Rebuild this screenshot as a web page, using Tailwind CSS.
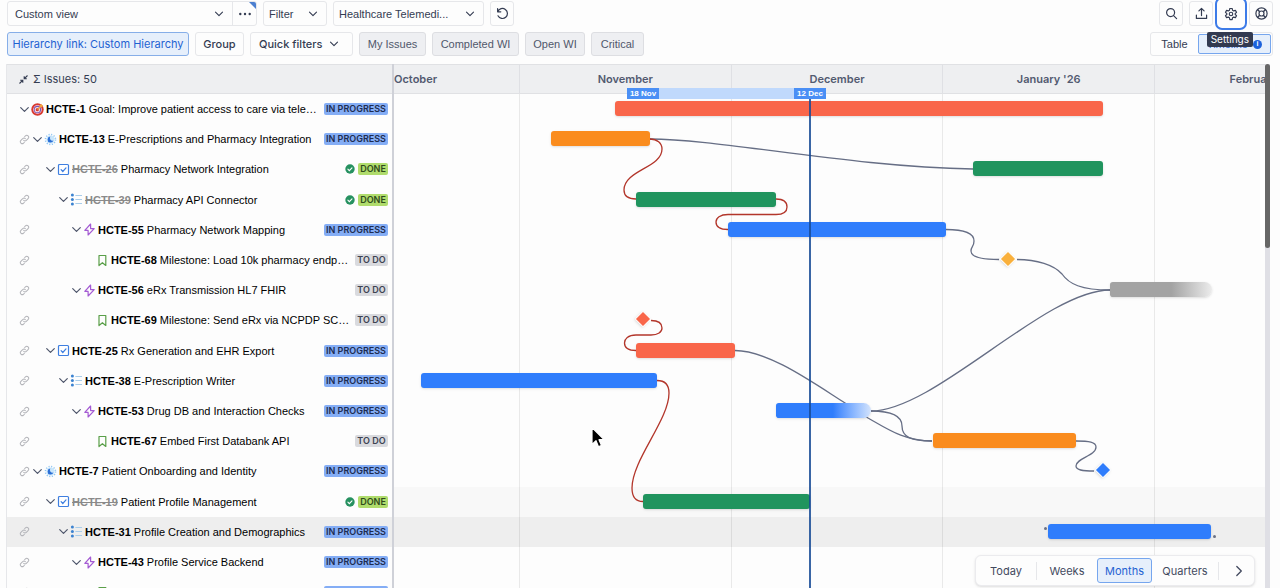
<!DOCTYPE html>
<html lang="en">
<head>
<meta charset="utf-8">
<title>Timeline</title>
<script src="https://cdn.jsdelivr.net/npm/@tailwindcss/browser@4"></script>
</head>
<body class="h-screen overflow-hidden bg-[#fdfdfd] font-['Liberation_Sans',sans-serif] text-[11px] leading-4 text-[#343c52]">
<svg class="hidden" aria-hidden="true">
  <symbol id="chev" viewBox="0 0 12 12"><path d="M2.5 4.2 6 7.7 9.5 4.2" fill="none" stroke="currentColor" stroke-width="1.1" stroke-linecap="round" stroke-linejoin="round"/></symbol>
  <symbol id="link" viewBox="0 0 12 12"><g fill="none" stroke="#b4b5ba" stroke-width="1.1" stroke-linecap="round"><path d="M5.1 6.9a2 2 0 0 0 2.9 0l1.9-1.9a2 2 0 0 0-2.9-2.9l-.9.9"/><path d="M6.9 5.1a2 2 0 0 0-2.9 0L2.1 7a2 2 0 0 0 2.9 2.9l.9-.9"/></g></symbol>
  <symbol id="goal" viewBox="0 0 13 13"><circle cx="6.5" cy="6.5" r="6.2" fill="#d8392f"/><circle cx="6.5" cy="6.5" r="4.4" fill="#f3c3cf"/><circle cx="6.5" cy="6.5" r="3.7" fill="#7d55b4"/><circle cx="6.3" cy="6.7" r="2.6" fill="#f6dfe6"/><circle cx="6.3" cy="6.7" r="1.6" fill="#d8392f"/><path d="M6.5 6.5 10 3" stroke="#f2a33a" stroke-width="1.2"/><path d="M8.8 2.4 10.4.8l.5 1.3 1.4.5-1.6 1.6-1.6.1z" fill="#f4a63c"/></symbol>
  <symbol id="sun" viewBox="0 0 13 13"><circle cx="6.5" cy="6.5" r="5" fill="none" stroke="#8fc6f3" stroke-width="1.6" stroke-dasharray="1.1 1.52"/><circle cx="6.5" cy="6.5" r="3.9" fill="#c9e6fb"/><path d="M6.3 3.6a3 3 0 1 0 3.1 4A2.700 2.700 0 0 1 6.300 3.600z" fill="#2b6fd6"/></symbol>
  <symbol id="task" viewBox="0 0 13 13"><rect x="1.5" y="1.5" width="10" height="10" rx="1" fill="#fff" stroke="#3f7fe0" stroke-width="1.2"/><path d="m4.1 6.7 1.7 1.8L9 4.9" fill="none" stroke="#3f7fe0" stroke-width="1.2" stroke-linecap="round"/></symbol>
  <symbol id="list" viewBox="0 0 13 13"><g fill="#3b82d0"><circle cx="2.4" cy="2" r="1.5"/><circle cx="2.4" cy="6.5" r="1.5"/><circle cx="2.4" cy="11" r="1.5"/></g><path d="M5.4 2.5H12M5.4 6.500H12M5.400 10.500H12" stroke="#a9cdea" stroke-width="1"/></symbol>
  <symbol id="bolt" viewBox="0 0 13 13"><path d="M7.600 1 1.800 7.400h3.300v4.600L11.200 5.600H7.600z" fill="none" stroke="#a45bd3" stroke-width="1.200" stroke-linejoin="round"/></symbol>
  <symbol id="mark" viewBox="0 0 13 13"><path d="M3 1.500h6.800v10L6.400 8.700 3 11.500z" fill="none" stroke="#5a9f49" stroke-width="1.200" stroke-linejoin="round"/></symbol>
  <symbol id="done" viewBox="0 0 10 10"><circle cx="5" cy="5" r="4.700" fill="#269160"/><path d="m2.900 5.200 1.400 1.400L7 3.800" fill="none" stroke="#fff" stroke-width="1.100" stroke-linecap="round"/></symbol>
</svg>

<div class="flex h-full flex-col">
  <header class="flex flex-col gap-[6px] px-[7px] pt-[1px] pb-2">
    <div class="flex items-center gap-[6px]">
      <div class="relative flex h-[25px] w-[250px] rounded-[3px] border border-[#e6e7ea]">
        <label class="relative flex flex-1 items-center">
          <select aria-label="View" class="h-full w-full appearance-none bg-transparent pl-[7px] outline-none"><option>Custom view</option></select>
          <svg class="pointer-events-none absolute right-[7px] size-3"><use href="#chev"/></svg>
        </label>
        <button aria-label="More view actions" class="relative flex w-6 items-center justify-center border-l border-[#e6e7ea]">
          <svg class="h-1 w-3" viewBox="0 0 12 4" fill="#343c52"><circle cx="1.300" cy="2" r="1.200"/><circle cx="6" cy="2" r="1.200"/><circle cx="10.700" cy="2" r="1.200"/></svg>
          <svg class="absolute top-0 right-0 size-[7px]" viewBox="0 0 7 7"><path d="M0 0h5a2 2 0 0 1 2 2v5z" fill="#4c7fd0"/></svg>
        </button>
      </div>
      <button aria-haspopup="true" class="flex h-[25px] w-[64px] items-center justify-between rounded-[3px] border border-[#e6e7ea] pr-[7px] pl-[5px]">Filter<svg class="size-3"><use href="#chev"/></svg></button>
      <label class="relative flex h-[25px] w-[151px] items-center rounded-[3px] border border-[#e6e7ea]">
        <select aria-label="Project" class="h-full w-full appearance-none bg-transparent pl-[5px] outline-none"><option>Healthcare Telemedi...</option></select>
        <svg class="pointer-events-none absolute right-[7px] size-3"><use href="#chev"/></svg>
      </label>
      <button aria-label="Reload" class="flex h-[25px] w-6 items-center justify-center rounded-[3px] border border-[#e6e7ea]">
        <svg class="size-[13px]" viewBox="0 0 13 13" fill="none" stroke="currentColor" stroke-width="1.200" stroke-linecap="round" stroke-linejoin="round"><path d="M1.600 1.600v3.200h3.200M1.800 4.600A5 5 0 1 1 2 8.800"/></svg>
      </button>
      <div class="ml-auto flex gap-[6px]">
        <button aria-label="Search" class="flex h-[25px] w-6 items-center justify-center rounded-[3px] border border-[#e6e7ea]"><svg class="size-[13px]" viewBox="0 0 13 13" fill="none" stroke="currentColor" stroke-width="1.200" stroke-linecap="round"><circle cx="5.600" cy="5.600" r="4"/><path d="m8.600 8.600 3 3"/></svg></button>
        <button aria-label="Export" class="flex h-[25px] w-6 items-center justify-center rounded-[3px] border border-[#e6e7ea]"><svg class="size-[13px]" viewBox="0 0 13 13" fill="none" stroke="currentColor" stroke-width="1.200" stroke-linecap="round" stroke-linejoin="round"><path d="M1.400 8v3.400h10.200V8M6.500 8.600V1.400M3.900 3.900l2.600-2.500 2.600 2.500"/></svg></button>
        <button aria-label="Settings" class="flex h-[25px] w-6 items-center justify-center rounded-[3px] outline-2 outline-offset-2 outline-[#3d7be8]"><svg class="size-[14px]" viewBox="0 0 24 24" fill="none" stroke="currentColor" stroke-width="2" stroke-linejoin="round"><circle cx="12" cy="12" r="3"/><path d="M10 2.500h4l.6 3 2 1.200 2.900-1 2 3.500-2.300 2v1.600l2.300 2-2 3.500-2.900-1-2 1.200-.6 3h-4l-.6-3-2-1.200-2.900 1-2-3.500 2.300-2v-1.600l-2.300-2 2-3.500 2.900 1 2-1.200z"/></svg></button>
        <button aria-label="Help" class="flex h-[25px] w-6 items-center justify-center rounded-[3px] border border-[#e6e7ea]"><svg class="size-[13px]" viewBox="0 0 13 13" fill="none" stroke="currentColor" stroke-width="1.200"><circle cx="6.500" cy="6.500" r="5.600"/><circle cx="6.500" cy="6.500" r="2.500"/><path d="m2.500 2.500 2.200 2.200M10.500 2.500 8.300 4.700M2.500 10.500l2.200-2.200M10.500 10.500 8.300 8.300" stroke-width="1.500"/></svg></button>
      </div>
    </div>
    <div class="flex items-center gap-[6px]">
      <button class="h-[24px] w-[182px] rounded-[3px] border border-[#86aee8] bg-[#e6effb] font-['Inter',sans-serif] text-[#1f62d2]">Hierarchy link: Custom Hierarchy</button>
      <button class="h-[24px] w-[49px] rounded-[3px] border border-[#e6e7ea] font-['Inter',sans-serif] font-medium">Group</button>
      <button aria-haspopup="true" class="flex h-[24px] w-[103px] items-center justify-between rounded-[3px] border border-[#e6e7ea] pr-3 pl-2 font-['Inter',sans-serif] font-medium">Quick filters<svg class="size-3"><use href="#chev"/></svg></button>
      <button class="h-[24px] w-[67px] rounded-[3px] border border-[#dddee2] bg-[#eeeff2] text-[#50576b]">My Issues</button>
      <button class="h-[24px] w-[87px] rounded-[3px] border border-[#dddee2] bg-[#eeeff2] text-[#50576b]">Completed WI</button>
      <button class="h-[24px] w-[60px] rounded-[3px] border border-[#dddee2] bg-[#eeeff2] text-[#50576b]">Open WI</button>
      <button class="h-[24px] w-[53px] rounded-[3px] border border-[#dddee2] bg-[#eeeff2] text-[#50576b]">Critical</button>
      <div class="relative ml-auto flex h-[24px] w-[123px] items-center rounded-[3px] border border-[#e6e7ea] pr-[1px]">
        <button class="flex-1">Table</button>
        <button class="flex h-5 w-[73px] items-center justify-end gap-[5px] rounded-[2px] border border-[#76a6ee] bg-[#e6effb] pr-2 text-[#1f62d2]">Timeline<span class="flex size-[9px] items-center justify-center rounded-full bg-[#1d62dc] text-[7px] font-bold text-white">i</span></button>
        <div role="tooltip" class="absolute -top-[1px] right-[19px] rounded-[2px] bg-[#323a50] px-1 font-['Inter',sans-serif] text-[10px] leading-[15px] text-white">Settings</div>
      </div>
    </div>
  </header>

  <main class="relative mr-[10px] ml-[6px] flex min-h-0 flex-1 overflow-hidden border-l border-[#e6e7ea]">
    <section aria-label="Issues" class="flex w-[387px] shrink-0 flex-col border-r-2 border-[#cfd1d8]">
      <div class="flex h-[30px] shrink-0 items-center gap-[5px] border-y border-[#e0e1e4] bg-[#eeeff1] pl-3">
        <svg class="size-[9px]" viewBox="0 0 9 9" fill="none" stroke="currentColor" stroke-width="1.100"><path d="M8.500.500 5.400 3.600M5.200 1.200v2.600h2.600M.500 8.500l3.100-3.100M1.200 5.200h2.600v2.600"/></svg>
        <span class="font-['Inter',sans-serif]">Σ Issues: 50</span>
      </div>
      <ul id="issues" class="grid h-[604px] shrink-0 grid-rows-20 text-black"></ul>
    </section>

    <section aria-label="Timeline" class="relative flex min-w-0 flex-1 flex-col overflow-hidden">
      <div class="flex h-[30px] w-[958px] shrink-0 border-y border-[#e0e1e4] bg-[#eeeff1] text-center font-['Inter',sans-serif] leading-7 font-semibold text-[#525a70]">
        <div class="w-[126px] border-r border-[#dfe0e4] text-left">October</div>
        <div class="flex-1 border-r border-[#dfe0e4]">November</div>
        <div class="flex-1 border-r border-[#dfe0e4]">December</div>
        <div class="flex-1 border-r border-[#dfe0e4]">January '26</div>
        <div class="w-[197px]">February</div>
      </div>
      <div class="relative">
        <ul id="bands" class="grid h-[604px] grid-rows-20"></ul>
        <div class="pointer-events-none absolute inset-y-0 left-0 flex w-[958px]">
          <div class="w-[126px] border-r border-black/8"></div>
          <div class="flex-1 border-r border-black/8"></div>
          <div class="flex-1 border-r border-black/8"></div>
          <div class="flex-1 border-r border-black/8"></div>
          <div class="w-[197px]"></div>
        </div>
        <svg class="pointer-events-none absolute top-0 left-0 h-[604px] w-[972px]" viewBox="394 94 972 604" fill="none" stroke-width="1.300" aria-label="Dependencies">
          <g stroke="#666e85">
            <path d="M650 139C720 139 850 167 973 169"/>
            <path d="M946 229.500C963 229.500 974 233 974 241 974 247 971 246 971 251 971 257 983 259.500 999 259.500"/>
            <path d="M1017 259.500C1037 259.500 1054 265 1062 274 1069 284 1081 290 1110 290"/>
            <path d="M871 411C935 411 1045 290 1110 290"/>
            <path d="M735 350.500C768 350.500 812 382 845 403L868 418C889 430 905 441 932 441"/>
            <path d="M871 411C888 411 902 415 902 426 902 437 911 441 932 441"/>
            <path d="M1076 441C1089 441 1096 442 1096 447 1096 456 1076 458 1076 466 1076 470 1082 471 1094 471"/>
          </g>
          <g stroke="#b3362b">
            <path d="M650 139C657 139 662 143 662 149 662 168 624 170 624 190 624 196 628 199 636 199"/>
            <path d="M776 199C783 199 787 202 787 207 787 212 783 214.500 776 214.500H728C720 214.500 716 218 716 222 716 227 720 229.500 728 229.500"/>
            <path d="M651 320.500C658 320.500 662 323 662 328 662 332 658 335 651 335H636C628 335 624.500 339 624.500 343 624.500 348 628 350.500 636 350.500"/>
            <path d="M657 380.500C665 380.500 669 385 669 393 669 420 632 460 632 488 632 497 635 501.500 643 501.500"/>
          </g>
        </svg>
        <ul id="bars" class="absolute inset-x-0 top-0 grid h-[604px] grid-rows-20"></ul>
        <div class="absolute inset-y-0 left-[415px] w-[2px] bg-[#164a95]/85"></div>
      </div>
      <div class="absolute top-6 left-[233px] flex h-[11px] w-[199px] justify-between bg-[#c0d9fc] text-[8px] leading-[11px] font-bold text-white">
        <span class="w-8 bg-[#4a8ff5] text-center">18 Nov</span>
        <span class="w-8 bg-[#4a8ff5] text-center">12 Dec</span>
      </div>
    </section>
    <div class="w-[5px] shrink-0 bg-[#dfdfe5]"><div class="h-[184px] rounded-full bg-[#666]"></div></div>
  </main>
</div>

<nav aria-label="Zoom level" class="absolute right-[25px] bottom-[2px] flex h-[31px] w-[280px] items-center rounded-[6px] border border-[#ebebee] bg-[#fdfdfd] font-['Inter',sans-serif] text-[#434a5f] shadow">
  <button class="w-[60px]">Today</button>
  <span class="h-[18px] w-px bg-[#e6e7ea]"></span>
  <button class="w-[60px]">Weeks</button>
  <button class="h-[25px] w-[55px] rounded-[3px] border border-[#76a6ee] bg-[#e6effb] text-[#1f62d2]">Months</button>
  <button class="w-[66px]">Quarters</button>
  <span class="h-[18px] w-px bg-[#e6e7ea]"></span>
  <button aria-label="Next" class="flex flex-1 justify-center pl-1"><svg class="size-3" viewBox="0 0 12 12" fill="none" stroke="currentColor" stroke-width="1.300" stroke-linecap="round" stroke-linejoin="round"><path d="m3.800 1.500 4.500 4.500-4.500 4.500"/></svg></button>
</nav>

<svg class="pointer-events-none absolute top-[426px] left-[590px] h-[23px] w-[15px]" viewBox="0 0 15 23"><path d="M2 1.500v17l4-3.800 2.500 6 3-1.300-2.500-5.700h5.300z" fill="#000" stroke="#fff" stroke-width="1.200" stroke-linejoin="round"/></svg>

<script>
const P = 'progress', T = 'todo', D = 'done';
// level, icon, key, title, status, [kind, start, length, colour class]
const rows = [
  [0,'goal','HCTE-1','Goal: Improve patient access to care via tele…',P,['bar',221,488,'rounded-[3px] bg-[#f9664a]']],
  [1,'sun','HCTE-13','E-Prescriptions and Pharmacy Integration',P,['bar',157,99,'rounded-[3px] bg-[#fa8c1e]']],
  [2,'task','HCTE-26','Pharmacy Network Integration',D,['bar',579,130,'rounded-[3px] bg-[#20945e]']],
  [3,'list','HCTE-39','Pharmacy API Connector',D,['bar',242,140,'rounded-[3px] bg-[#20945e]']],
  [4,'bolt','HCTE-55','Pharmacy Network Mapping',P,['bar',334,218,'rounded-[3px] bg-[#2f7dfc]']],
  [5,'mark','HCTE-68','Milestone: Load 10k pharmacy endp…',T,['gem',614,0,'bg-[#f9b03c]']],
  [4,'bolt','HCTE-56','eRx Transmission HL7 FHIR',T,['bar',716,102,'rounded-l-[3px] rounded-r-[8px] bg-linear-to-r from-[#a3a3a3] from-60% to-[#ececec]']],
  [5,'mark','HCTE-69','Milestone: Send eRx via NCPDP SC…',T,['gem',249,0,'bg-[#f9664a]']],
  [2,'task','HCTE-25','Rx Generation and EHR Export',P,['bar',242,99,'rounded-[3px] bg-[#f9664a]']],
  [3,'list','HCTE-38','E-Prescription Writer',P,['bar',27,236,'rounded-[3px] bg-[#2f7dfc]']],
  [4,'bolt','HCTE-53','Drug DB and Interaction Checks',P,['bar',382,95,'rounded-l-[3px] rounded-r-[8px] bg-linear-to-r from-[#2f7dfc] from-60% to-[#d3e3fc]']],
  [5,'mark','HCTE-67','Embed First Databank API',T,['bar',539,143,'rounded-[3px] bg-[#fa8c1e]']],
  [1,'sun','HCTE-7','Patient Onboarding and Identity',P,['gem',709,0,'bg-[#2f7dfc]']],
  [2,'task','HCTE-19','Patient Profile Management',D,['bar',249,167,'rounded-[3px] bg-[#20945e]']],
  [3,'list','HCTE-31','Profile Creation and Demographics',P,['bar',654,163,'rounded-[3px] bg-[#2f7dfc]']],
  [4,'bolt','HCTE-43','Profile Service Backend',P,null],
  [5,'mark','HCTE-61','Create patient profile API',P,null],
];
const badges = {
  progress: '<span class="w-16 rounded-[2px] bg-[#84adf5] text-center text-[9px] leading-3 font-semibold text-[#1d2c50]">IN PROGRESS</span>',
  todo: '<span class="w-[33px] rounded-[2px] bg-[#d9dade] text-center text-[9px] leading-3 font-semibold text-[#3d4252]">TO DO</span>',
  done: '<svg class="size-[10px]"><use href="#done"/></svg><span class="w-[30px] rounded-[2px] bg-[#b0dc6c] text-center text-[9px] leading-3 font-semibold text-[#2f4a1c]">DONE</span>',
};
let left = '', right = '', bands = '';
rows.forEach(([lvl, icon, key, title, st, bar], i) => {
  const leaf = icon === 'mark', pad = (leaf ? lvl : Math.max(lvl - 1, 0)) * 13;
  left += `<li class="flex items-center pr-[4px] pl-[11px] ${i === 14 ? 'bg-[#eeeeee]' : ''}">
    ${lvl ? '<svg class="mx-[1px] size-[11px] shrink-0"><use href="#link"/></svg>' : ''}
    <span class="shrink-0" style="width:${pad}px"></span>
    ${leaf ? '' : '<button aria-label="Collapse" class="size-[13px] shrink-0 text-[#4d556a]"><svg class="size-[13px]"><use href="#chev"/></svg></button>'}
    <svg class="size-[13px] shrink-0"><use href="#${icon}"/></svg>
    <a href="#${key}" class="ml-[2px] font-bold whitespace-nowrap ${st === D ? 'text-[#8a8a8a] line-through' : ''}">${key}</a>
    <span class="ml-[3px] whitespace-nowrap">${title}</span>
    <span class="ml-auto flex items-center gap-[3px] font-['Inter',sans-serif]">${badges[st]}</span></li>`;
  let mark = '';
  if (bar && bar[0] === 'bar') mark = `<div class="absolute top-[7px] h-[15px] shadow-sm ${bar[3]}" style="left:${bar[1]}px;width:${bar[2]}px"></div>`;
  if (bar && bar[0] === 'gem') mark = `<div class="absolute top-[8px] -ml-[6px] size-3 rotate-45 rounded-[1px] border border-white shadow ${bar[3]}" style="left:${bar[1]}px"></div>`;
  if (i === 14) mark += '<i class="absolute top-[10px] left-[650px] size-[3px] rounded-full bg-[#6b7285]"></i><i class="absolute top-[18px] left-[819px] size-[3px] rounded-full bg-[#6b7285]"></i>';
  right += `<li class="relative">${mark}</li>`;
  bands += `<li class="${i === 14 ? 'bg-[#eeeeee]' : i === 13 ? 'bg-[#f8f8f8]' : ''}"></li>`;
});
document.getElementById('issues').innerHTML = left;
document.getElementById('bars').innerHTML = right;
document.getElementById('bands').innerHTML = bands;
</script>
</body>
</html>
